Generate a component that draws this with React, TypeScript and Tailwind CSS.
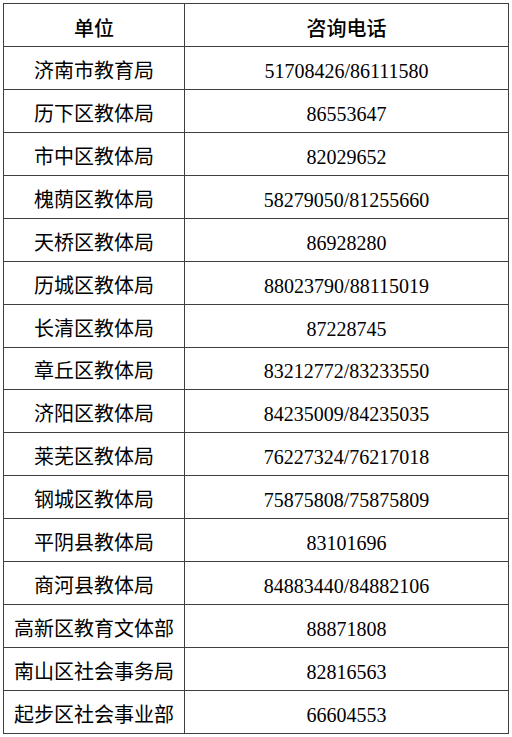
const rows: [string, string][] = [
  ['济南市教育局', '51708426/86111580'],
  ['历下区教体局', '86553647'],
  ['市中区教体局', '82029652'],
  ['槐荫区教体局', '58279050/81255660'],
  ['天桥区教体局', '86928280'],
  ['历城区教体局', '88023790/88115019'],
  ['长清区教体局', '87228745'],
  ['章丘区教体局', '83212772/83233550'],
  ['济阳区教体局', '84235009/84235035'],
  ['莱芜区教体局', '76227324/76217018'],
  ['钢城区教体局', '75875808/75875809'],
  ['平阴县教体局', '83101696'],
  ['商河县教体局', '84883440/84882106'],
  ['高新区教育文体部', '88871808'],
  ['南山区社会事务局', '82816563'],
  ['起步区社会事业部', '66604553'],
];

const bodyFont = "font-['Liberation_Serif','Noto_Sans_CJK_SC',serif]";

export default function App() {
  return (
    <div className="min-h-[737px] w-[512px] bg-white pl-[3px] pt-[3px]">
      <div className="grid h-[731px] w-[506px] grid-cols-[180px_323px] grid-rows-[repeat(17,minmax(0,1fr))] gap-px bg-[#3f3f3f] p-px text-black">
        <div className="flex items-center justify-center bg-white pt-[6px] font-['Noto_Sans_CJK_SC',sans-serif] text-[20px] font-medium">
          单位
        </div>
        <div className="flex items-center justify-center bg-white pt-[6px] font-['Noto_Sans_CJK_SC',sans-serif] text-[20px] font-medium">
          咨询电话
        </div>
        {rows.map(([unit, phone]) => (
          <>
            <div key={unit} className={`flex items-center justify-center bg-white pt-[6px] text-[20px] ${bodyFont}`}>
              {unit}
            </div>
            <div key={unit + phone} className={`flex items-center justify-center bg-white pt-[6px] text-[20px] ${bodyFont}`}>
              {phone}
            </div>
          </>
        ))}
      </div>
    </div>
  );
}
